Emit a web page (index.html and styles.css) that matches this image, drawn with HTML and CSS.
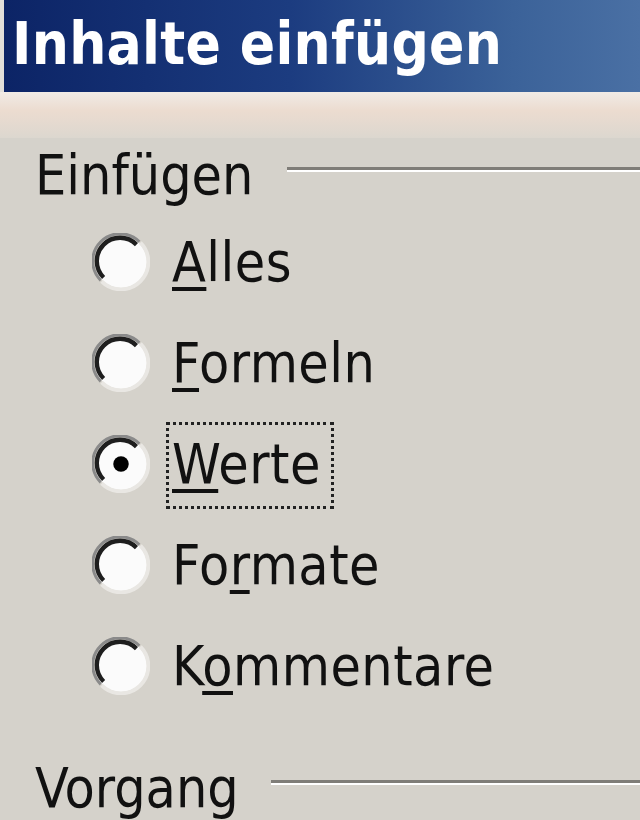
FILE: index.html
```html
<!DOCTYPE html>
<html lang="de">
<head>
<meta charset="utf-8">
<title>Inhalte einfügen</title>
<link rel="stylesheet" href="styles.css">
</head>
<body>
<div class="window">
  <div class="titlebar"><span class="title">Inhalte einfügen</span></div>
  <div class="band"></div>
  <div class="body">
    <div class="group-head"><span class="group-label">Einfügen</span><span class="rule"></span></div>
    <ul class="options">
      <li class="option"><svg class="radio" viewBox="0 0 60 60"><circle cx="30" cy="30" r="27" fill="#fbfbfb"/><path d="M9 49 A28 28 0 0 1 49 9" fill="none" stroke="#8a8a8a" stroke-width="3"/><path d="M12 46 A24 24 0 0 1 46 12" fill="none" stroke="#1e1e1e" stroke-width="4.5"/><path d="M50 10 A28 28 0 0 1 10 50" fill="none" stroke="#e9e7e3" stroke-width="4"/></svg><span class="label"><u>A</u>lles</span></li>
      <li class="option"><svg class="radio" viewBox="0 0 60 60"><circle cx="30" cy="30" r="27" fill="#fbfbfb"/><path d="M9 49 A28 28 0 0 1 49 9" fill="none" stroke="#8a8a8a" stroke-width="3"/><path d="M12 46 A24 24 0 0 1 46 12" fill="none" stroke="#1e1e1e" stroke-width="4.5"/><path d="M50 10 A28 28 0 0 1 10 50" fill="none" stroke="#e9e7e3" stroke-width="4"/></svg><span class="label"><u>F</u>ormeln</span></li>
      <li class="option"><svg class="radio" viewBox="0 0 60 60"><circle cx="30" cy="30" r="27" fill="#fbfbfb"/><path d="M9 49 A28 28 0 0 1 49 9" fill="none" stroke="#8a8a8a" stroke-width="3"/><path d="M12 46 A24 24 0 0 1 46 12" fill="none" stroke="#1e1e1e" stroke-width="4.5"/><path d="M50 10 A28 28 0 0 1 10 50" fill="none" stroke="#e9e7e3" stroke-width="4"/><circle cx="30" cy="30" r="8" fill="#000"/></svg><span class="label focus"><u>W</u>erte</span></li>
      <li class="option"><svg class="radio" viewBox="0 0 60 60"><circle cx="30" cy="30" r="27" fill="#fbfbfb"/><path d="M9 49 A28 28 0 0 1 49 9" fill="none" stroke="#8a8a8a" stroke-width="3"/><path d="M12 46 A24 24 0 0 1 46 12" fill="none" stroke="#1e1e1e" stroke-width="4.5"/><path d="M50 10 A28 28 0 0 1 10 50" fill="none" stroke="#e9e7e3" stroke-width="4"/></svg><span class="label">Fo<u>r</u>mate</span></li>
      <li class="option"><svg class="radio" viewBox="0 0 60 60"><circle cx="30" cy="30" r="27" fill="#fbfbfb"/><path d="M9 49 A28 28 0 0 1 49 9" fill="none" stroke="#8a8a8a" stroke-width="3"/><path d="M12 46 A24 24 0 0 1 46 12" fill="none" stroke="#1e1e1e" stroke-width="4.5"/><path d="M50 10 A28 28 0 0 1 10 50" fill="none" stroke="#e9e7e3" stroke-width="4"/></svg><span class="label">K<u>o</u>mmentare</span></li>
    </ul>
    <div class="group-head second"><span class="group-label">Vorgang</span><span class="rule"></span></div>
  </div>
</div>
</body>
</html>
```

FILE: styles.css
```css
html, body {
  margin: 0;
  padding: 0;
  height: 100%;
  overflow: hidden;
}
body {
  background: #d5d2cb;
  font-family: "DejaVu Sans Condensed", "DejaVu Sans", sans-serif;
  color: #111;
}
.window {
  display: flex;
  flex-direction: column;
  padding-left: 4px;
  background: #e2dfda;
  height: 100%;
}
.titlebar {
  flex: none;
  height: 92px;
  background: linear-gradient(to right, #0c2466 0%, #1c3c80 45%, #3b6299 80%, #4a70a4 100%);
  display: flex;
  align-items: center;
  padding-left: 8px;
}
.title {
  color: #fff;
  font-weight: bold;
  font-size: 58px;
  line-height: 1;
  margin-top: -4px;
  letter-spacing: 0.3px;
}
.band {
  flex: none;
  height: 46px;
  margin-left: -4px;
  background: linear-gradient(to bottom, #f1ebe6 0%, #ecdcd0 40%, #dcd7cf 100%);
}
.body {
  flex: 1;
  margin-left: -4px;
  background: #d5d2cb;
  padding-left: 35px;
}
.group-head {
  display: flex;
  align-items: center;
  height: 76px;
  margin-top: -2px;
}
.group-label {
  font-size: 55px;
  line-height: 1;
  margin-top: 2px;
}
.rule {
  flex: 1;
  height: 0;
  border-top: 3px solid #7f7d78;
  border-bottom: 2px solid #fff;
  margin-left: 34px;
  margin-top: -10px;
}
.options {
  list-style: none;
  margin: -1px 0 0 0;
  padding: 0 0 0 57px;
}
.option {
  display: flex;
  align-items: center;
  height: 101px;
}
.radio {
  width: 58px;
  height: 58px;
  flex: none;
}
.label {
  font-size: 55px;
  line-height: 1;
  margin-left: 25px;
  padding: 12px 10px 14px 3px;
  margin-top: 4px;
  border: 3px dotted transparent;
  margin-right: -9px;
  position: relative;
  left: -9px;
  letter-spacing: 0.5px;
}
.label u {
  text-decoration-thickness: 4px;
  text-underline-offset: 6px;
}
.label.focus {
  border-color: #222;
}
.second {
  margin-top: 33px;
}
.second .rule {
  margin-left: 32px;
}
```
